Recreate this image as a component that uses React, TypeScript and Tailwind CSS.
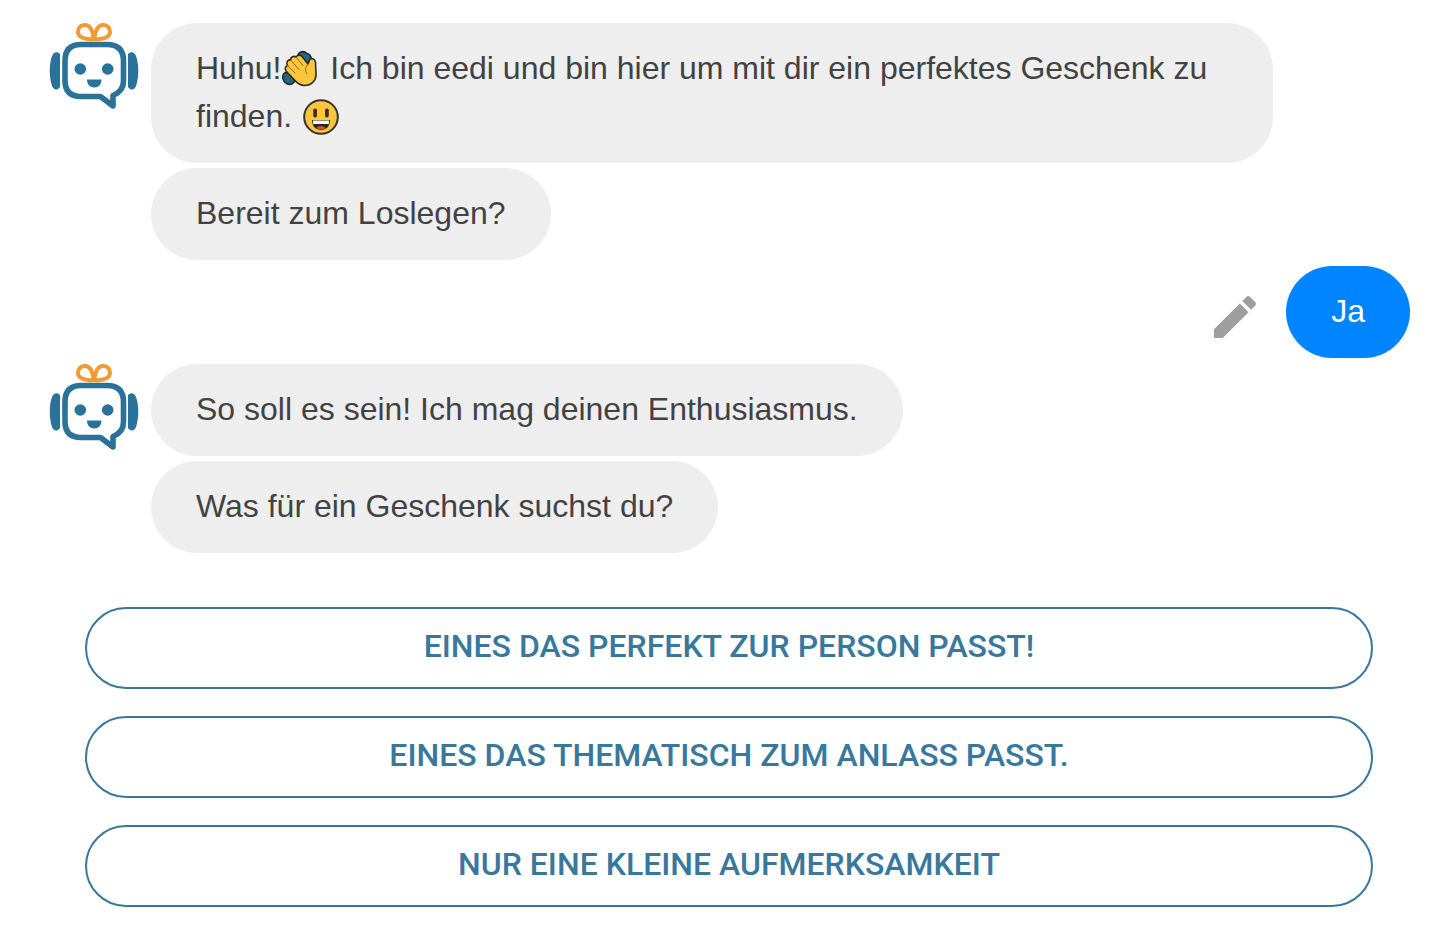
import type { ReactNode } from 'react'
import { clsx } from 'clsx'

const ANSWERS = [
  'Eines das perfekt zur Person passt!',
  'Eines das thematisch zum Anlass passt.',
  'Nur eine kleine Aufmerksamkeit',
]

function BotAvatar() {
  return (
    <svg viewBox="0 0 90 88" className="h-[88px] w-[90px] shrink-0" role="img" aria-label="eedi">
      <g fill="none" stroke="#f39a32" strokeWidth="4" strokeLinejoin="round">
        <path d="M44.500 16C37 17 29 14.500 29 9C29 4.500 32 2 36 2C41 2 44.500 8 44.500 16Z" />
        <path d="M45.500 16C53 17 61 14.500 61 9C61 4.500 58 2 54 2C49 2 45.500 8 45.500 16Z" />
      </g>
      <g fill="#2a7299">
        <path d="M11 31V64C8 68 4.500 67 3 63C0 54 0 41 3 33C4.500 29 8 28 11 31Z" />
        <path d="M79 31V64C82 68 85.500 67 87 63C90 54 90 41 87 33C85.500 29 82 28 79 31Z" />
        <circle cx="31.300" cy="46" r="5.800" />
        <circle cx="58.700" cy="46" r="5.800" />
        <path d="M38 56.500H52.500C52.500 61.500 49.500 64.500 45.200 64.500C41 64.500 38 61.500 38 56.500Z" />
      </g>
      <path
        d="M32 21.500H58Q74.500 21.500 74.500 38V58Q74.500 68 64 72.500V83L51.500 73.500H32Q16 73.500 16 57.500V38Q16 21.500 32 21.500Z"
        fill="none"
        stroke="#2a7299"
        strokeWidth="5.600"
        strokeLinejoin="round"
      />
    </svg>
  )
}

function ClapEmoji() {
  return (
    <svg
      viewBox="0 0 36 36"
      className="mx-0.5 inline-block size-9 overflow-visible align-[-8px]"
      role="img"
      aria-label="👏"
    >
      <g fill="#27667f" stroke="#1d2a30" strokeWidth="1.500">
        <path d="M14.500 5C16 0 21 -0.500 24 2.500C28.500 4 29.500 8 26.500 12L21 12Z" />
        <path d="M1.500 22C-1.500 25 -0.500 30.500 3.500 32.500C7.500 34.500 11 33 12 29L7 21Z" />
      </g>
      <path
        d="M3 20C1.500 17.500 2.500 15 4.500 14.500C2.500 11.500 5 8.500 7.500 9C7.500 6 11 4.500 13 6C15 3.500 18 4 19.500 6L25 13L26.500 9C27.500 6.500 32 7.500 32.500 11L33 24C33 30 28 34.500 21.500 34.500C17 34.500 14 32 11 28.500Z"
        fill="#fdc53b"
        stroke="#2b2823"
        strokeWidth="1.600"
        strokeLinejoin="round"
      />
      <path
        d="M4.500 14.500L12 22M7.500 9L16 18.500M13 6L20 14.500M25 13C22 16 22 20 24 23"
        fill="none"
        stroke="#8a6a24"
        strokeWidth="1"
        strokeLinecap="round"
      />
    </svg>
  )
}

function GrinEmoji() {
  return (
    <svg viewBox="0 0 36 36" className="mx-0.5 inline-block size-9 align-[-8px]" role="img" aria-label="😃">
      <circle cx="18" cy="18" r="16.800" fill="#fdc53b" stroke="#333" strokeWidth="2" />
      <rect x="10.200" y="9.500" width="3.800" height="9" rx="1.700" fill="#3a3020" />
      <rect x="22" y="9.500" width="3.800" height="9" rx="1.700" fill="#3a3020" />
      <path d="M9 21H27C27 27.500 23 31 18 31C13 31 9 27.500 9 21Z" fill="#33251f" />
      <path d="M10 21.500H26V25H10Z" fill="#fff" />
      <path d="M13.500 29C15 26.500 21 26.500 22.500 29C20 30.800 16 30.800 13.500 29Z" fill="#e5502e" />
    </svg>
  )
}

function Bubble({ own = false, children }: { own?: boolean; children: ReactNode }) {
  return (
    <p
      className={clsx(
        'rounded-[46px] px-[45px] pt-[21px] pb-[23px]',
        own ? 'bg-[#0084ff] text-white' : 'bg-[#eeeeee] text-[#424242]'
      )}
    >
      {children}
    </p>
  )
}

function BotMessages({ children }: { children: ReactNode }) {
  return (
    <div className="flex items-start gap-3 pr-[137px]">
      <BotAvatar />
      <div className="flex min-w-0 flex-1 flex-col items-start gap-[5px]">{children}</div>
    </div>
  )
}

export default function App() {
  return (
    <main className="min-h-screen bg-white pt-[23px] pr-[34px] pb-10 pl-[49px] font-['Liberation_Sans',Arial,sans-serif] text-[32px] leading-[48px]">
      <section className="flex flex-col gap-[6px]" aria-label="Chat">
        <BotMessages>
          <Bubble>
            Huhu!
            <ClapEmoji /> Ich bin eedi und bin hier um mit dir ein perfektes Geschenk zu{' '}
            finden. <GrinEmoji />
          </Bubble>
          <Bubble>Bereit zum Loslegen?</Bubble>
        </BotMessages>

        <div className="flex items-start justify-end gap-[23px]">
          <button type="button" aria-label="Antwort bearbeiten" className="mt-[23px] text-[#9e9e9e]">
            <svg viewBox="0 0 24 24" className="size-14" fill="currentColor" aria-hidden="true">
              <path d="M3 17.250V21h3.750L17.810 9.940l-3.750-3.750L3 17.250zM20.710 7.040c.39-.39.39-1.020 0-1.410l-2.340-2.340c-.39-.39-1.020-.39-1.410 0l-1.830 1.830 3.750 3.750 1.830-1.830z" />
            </svg>
          </button>
          <Bubble own>Ja</Bubble>
        </div>

        <BotMessages>
          <Bubble>So soll es sein! Ich mag deinen Enthusiasmus.</Bubble>
          <Bubble>Was für ein Geschenk suchst du?</Bubble>
        </BotMessages>
      </section>

      <div className="mt-[54px] mr-[37px] ml-9 flex flex-col gap-[27px]">
        {ANSWERS.map((answer) => (
          <button
            key={answer}
            type="button"
            className="rounded-full border-2 border-[#39789d] px-10 pt-[13px] pb-[17px] font-[Roboto,sans-serif] font-medium text-[#39789d] uppercase"
          >
            {answer}
          </button>
        ))}
      </div>
    </main>
  )
}
